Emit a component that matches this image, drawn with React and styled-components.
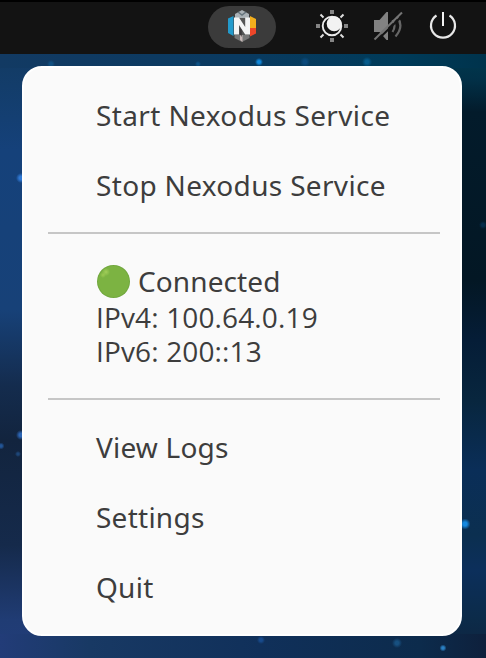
import React from "react";
import styled, { createGlobalStyle } from "styled-components";

const GlobalStyle = createGlobalStyle`
  * { box-sizing: border-box; }
  body { margin: 0; background: #0c2848; overflow: hidden; }
`;

const star = (x, y, r, color) =>
  `radial-gradient(circle at ${x}px ${y}px, ${color} 0, ${color} ${r * 0.35}px, transparent ${r}px)`;

const stars = [
  star(259, 62, 4, "#1189dc"),
  star(305, 62, 5, "#0b4a7c"),
  star(367, 62, 5, "#075c8c"),
  star(51, 64, 4, "#104f80"),
  star(198, 64, 3, "#0d5286"),
  star(21, 178, 5, "#2f78d4"),
  star(21, 435, 5, "#2c65b4"),
  star(1, 446, 3.5, "#225596"),
  star(18, 454, 3, "#1d4678"),
  star(465, 524, 5.5, "#1589e0"),
  star(483, 225, 4, "#052c4a"),
  star(261, 640, 4, "#174a8c"),
  star(397, 643, 5, "#175080"),
  star(443, 648, 3.5, "#2a80c4"),
].join(",");

const Desktop = styled.div`
  width: 486px;
  height: 658px;
  display: flex;
  flex-direction: column;
  font-family: "Noto Sans", "Open Sans", sans-serif;
  background:
    ${stars},
    linear-gradient(90deg, #123a63 0, #0a3a60 240px, #003b59 400px, #00334c 486px) 0 54px / 486px 14px no-repeat,
    linear-gradient(90deg, #223c78 0, #183964 90px, #10305a 260px, #0c2b4c 420px, #0e203c 486px) 0 634px / 486px 24px no-repeat,
    linear-gradient(180deg, #123b63 54px, #15417a 150px, #174178 310px, #142c4e 385px, #12243e 440px, #152a4b 545px, #203c74 620px, #223d7a 658px) 0 0 / 40px 658px no-repeat,
    linear-gradient(180deg, #00394f 54px, #023047 80px, #031b2b 112px, #031724 280px, #051d37 340px, #08263e 400px, #0a2e58 470px, #0b2f50 535px, #0c2f5b 570px, #0c2b49 620px, #0f223e 658px) 440px 0 / 46px 658px no-repeat;
`;

const TopBar = styled.header`
  height: 54px;
  flex: none;
  display: flex;
  align-items: flex-start;
  padding: 4px 28px 0 208px;
  background: #131313;
  border-top: 2px solid #000;
`;

const TrayButton = styled.div`
  width: 68px;
  height: 42px;
  padding-top: 2px;
  border-radius: 21px;
  background: #3b3b3b;
  display: flex;
  justify-content: center;
`;

const StatusIcons = styled.div`
  display: flex;
  margin-left: 40px;
  gap: 24px;
  padding-top: 4px;
`;

const Icon = styled.svg`
  display: block;
  flex: none;
`;

const Menu = styled.nav`
  width: 440px;
  height: 570px;
  margin: 12px 0 0 22px;
  padding: 12px 20px 12px 24px;
  border: 2px solid #fff;
  border-radius: 20px;
  background: #fafafa;
  color: #3d3d3d;
  font-size: 28px;
`;

const MenuItem = styled.div`
  height: 70px;
  padding-left: 48px;
  line-height: 70px;
  white-space: nowrap;
  letter-spacing: ${(p) => p.$tracking || 0}px;
`;

const Separator = styled.hr`
  height: 2px;
  border: 0;
  margin: 12px 0;
  background: #c6c6c6;
`;

const StatusBlock = styled.div`
  height: 140px;
  padding: 16px 0 0 48px;
`;

const StatusLine = styled.div`
  display: flex;
  align-items: center;
  height: 38px;
  line-height: 34px;
  white-space: nowrap;
  letter-spacing: 0.1px;
`;

const AddressLines = styled.div`
  font-family: "Open Sans", "Noto Sans", sans-serif;
  line-height: 34px;
  letter-spacing: 0.14px;
  white-space: pre;
`;

const StatusDot = styled.span`
  width: 33px;
  height: 33px;
  margin: 0 8px 0 1px;
  border-radius: 50%;
  background:
    radial-gradient(circle at 9px 7px, #a3cf5a 0, transparent 4px),
    radial-gradient(circle at 6px 10px, #9cca52 0, transparent 3px),
    radial-gradient(circle at 50% 50%, #7cb342 0, #7cb342 64%, #689f38 72%);
`;

function NexodusLogo() {
  return (
    <Icon width="32" height="36" viewBox="226 8 32 36">
      <path d="M242 10l7 4v5h-14v-5z" fill="#a9b0b5" />
      <path d="M238 12l4 3 4-3" stroke="#65737c" strokeWidth="1.5" fill="none" />
      <path d="M228 18.5l5.5-2.5v20L228 33z" fill="#239acb" />
      <path d="M250 16l6 3v9h-6z" fill="#f2ae1d" />
      <path d="M250 28h6v5.5l-6 3z" fill="#ed4629" />
      <path d="M234.5 33h15v5l-7.5 4-7.5-4z" fill="#777" />
      <path d="M240 34v6l2.5 2v-9" fill="#c8b9b7" />
      <path d="M234 18h16v17h-16z" fill="#555" />
      <path d="M234 34.5v-17h5l6.2 9.5v-9.5h4.8v17h-4.8L239 25v9.5z" fill="#f4f4f4" />
      <path d="M239.7 27v7l2 3v-7z" fill="#3c393b" />
    </Icon>
  );
}

function NightLightIcon() {
  return (
    <Icon width="32" height="32" viewBox="316 10 32 32">
      <g fill="#858585">
        <rect x="330" y="10" width="4" height="4" />
        <rect x="316" y="24" width="4" height="4" />
        <rect x="344" y="24" width="4" height="4" />
        <rect x="330" y="38" width="4" height="4" />
      </g>
      <path d="M320.5 14.5l3 3M343.5 14.5l-3 3M320.5 37.5l3-3M343.5 37.5l-3-3" stroke="#dedede" strokeWidth="2" />
      <circle cx="332" cy="26" r="9.3" fill="none" stroke="#ececec" strokeWidth="1.9" />
      <circle cx="334.2" cy="23.8" r="7.5" fill="#f2f2f2" />
    </Icon>
  );
}

function MutedIcon() {
  return (
    <Icon width="32" height="32" viewBox="372 10 32 32">
      <path d="M374 20h5.5l7-8H388v28h-1.5l-7-8H374z" fill="#828282" />
      <path d="M392.5 20q4 6 0 12M397 16.5q7.5 10-1.5 20" fill="none" stroke="#666" strokeWidth="2.2" />
      <path d="M376.5 41L404 14" stroke="#131313" strokeWidth="2.2" />
      <path d="M374.5 39.5L402 12.5" stroke="#747474" strokeWidth="2" />
    </Icon>
  );
}

function PowerIcon() {
  return (
    <Icon width="30" height="32" viewBox="428 10 30 32">
      <path d="M436.5 15.5A12 12 0 1 0 449.5 15.5" fill="none" stroke="#e8e8e8" strokeWidth="2.2" />
      <path d="M443 12v14" stroke="#f2f2f2" strokeWidth="2" />
    </Icon>
  );
}

export default function App() {
  return (
    <>
      <GlobalStyle />
      <Desktop>
        <TopBar>
          <TrayButton>
            <NexodusLogo />
          </TrayButton>
          <StatusIcons>
            <NightLightIcon />
            <MutedIcon />
            <PowerIcon />
          </StatusIcons>
        </TopBar>
        <Menu>
          <MenuItem $tracking={0.38}>Start Nexodus Service</MenuItem>
          <MenuItem $tracking={0.33}>Stop Nexodus Service</MenuItem>
          <Separator />
          <StatusBlock>
            <StatusLine>
              <StatusDot />
              Connected
            </StatusLine>
            <AddressLines>{"IPv4: 100.64.0.19\nIPv6: 200::13"}</AddressLines>
          </StatusBlock>
          <Separator />
          <MenuItem $tracking={0.2}>View Logs</MenuItem>
          <MenuItem $tracking={0.25}>Settings</MenuItem>
          <MenuItem $tracking={0.25}>Quit</MenuItem>
        </Menu>
      </Desktop>
    </>
  );
}
